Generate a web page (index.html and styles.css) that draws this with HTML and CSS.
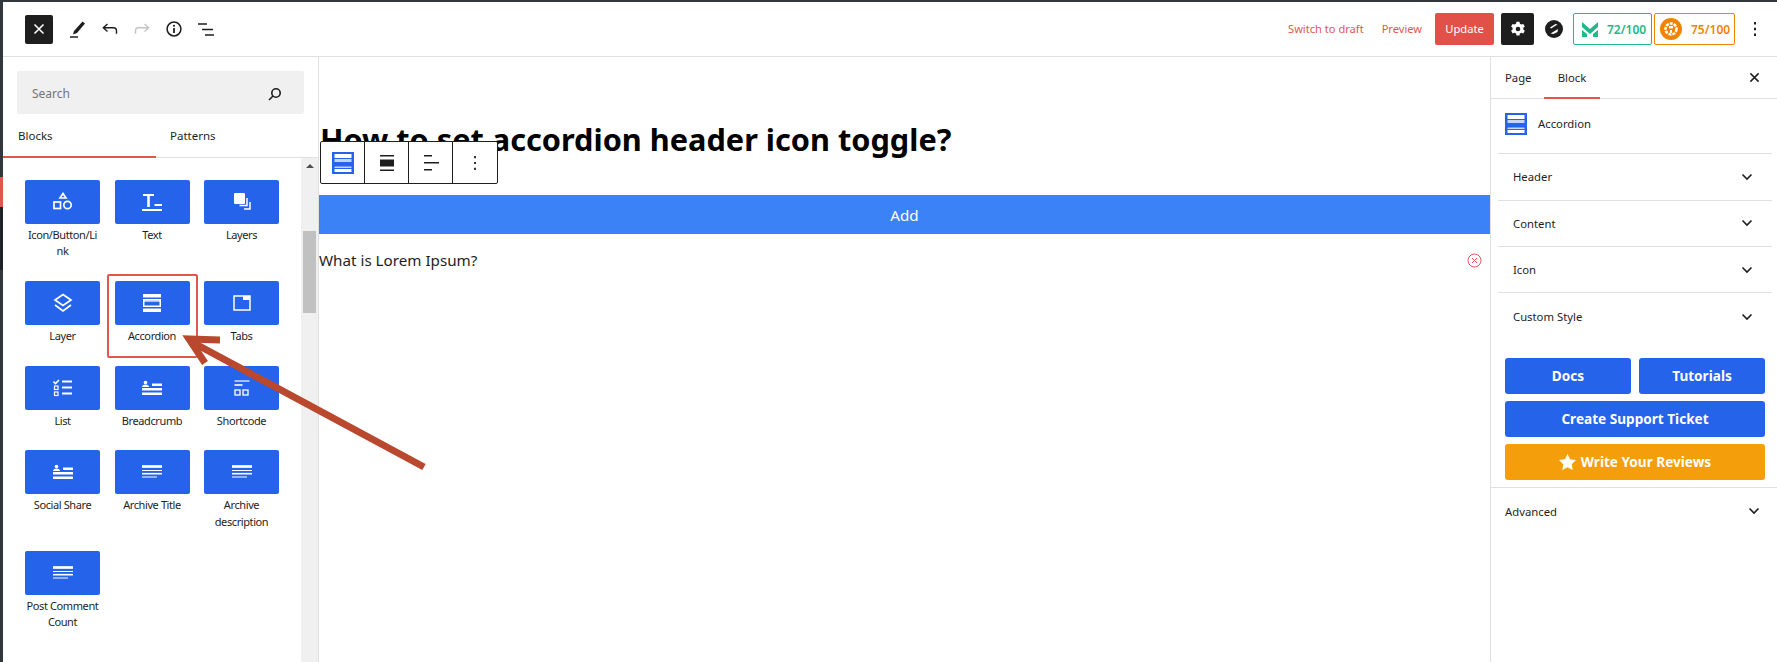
FILE: index.html
```html
<!DOCTYPE html>
<html lang="en">

<head>
  <meta charset="UTF-8">
  <title>Edit Page</title>
  <link rel="stylesheet" href="styles.css">
</head>

<body>
  <svg class="defs" width="0" height="0">
    <symbol id="chevron" viewBox="0 0 12 8"><path d="M1.5 1.5 6 6l4.5-4.5" fill="none" stroke="#1e1e1e" stroke-width="1.6"/></symbol>
    <symbol id="cross" viewBox="0 0 12 12"><path d="M1.5 1.5l9 9M10.5 1.5l-9 9" fill="none" stroke="currentColor" stroke-width="1.6"/></symbol>
    <symbol id="lines" viewBox="0 0 20 14"><path d="M0 1.5h20" stroke="#fff" stroke-width="2.7"/><path d="M0 5.5h20M0 12h15" stroke="#fff" stroke-width="1.2"/><path d="M0 8.7h20" stroke="#fff" stroke-width="1.6"/></symbol>
    <symbol id="person" viewBox="0 0 20 16"><circle cx="3.5" cy="2.5" r="1.8" fill="#fff"/><path d="M0 7c0-1.6 1.5-2.6 3.5-2.6S7 5.4 7 7zM10 3.5h10V6H10zM0 8h20v2.500H0zM0 12.500h20V15H0z" fill="#fff"/></symbol>
    <symbol id="accordion" viewBox="0 0 22 22"><rect width="22" height="22" fill="#2563eb"/><rect x="2.5" y="2" width="17" height="4" fill="#fff"/><rect x="2.5" y="7" width="17" height="3" fill="#c5d4f8"/><rect x="2.5" y="14.5" width="17" height="1.5" fill="#c5d4f8"/><rect x="2.5" y="17" width="17" height="3" fill="#fff"/></symbol>
  </svg>

  <div class="topline"></div>

  <div class="app">
    <div class="edge">
      <div class="edge-dark"></div>
      <div class="edge-red"></div>
      <div class="edge-dark edge-tail"></div>
      <div class="edge-grey"></div>
    </div>

    <div class="workspace">
      <header class="topbar">
        <div class="tools">
          <button class="close-btn" type="button"><svg width="12" height="12"><use href="#cross"/></svg></button>
          <svg class="tool" width="16" height="18" viewBox="0 0 16 18"><path d="M4 11 12.5 1.5l2.5 2L7 13l-4 1.5z" fill="#1e1e1e"/><path d="M0 17h8" stroke="#1e1e1e" stroke-width="1.5"/></svg>
          <svg class="tool" width="16" height="12" viewBox="0 0 16 12"><path d="M5.5 1 1.3 4.8l4.2 3.8M1.5 4.800h10c2 0 3 1.200 3 3v3" fill="none" stroke="#1e1e1e" stroke-width="1.4"/></svg>
          <svg class="tool" width="16" height="12" viewBox="0 0 16 12"><path d="M10.5 1l4.2 3.8-4.200 3.800M14.5 4.800h-10c-2 0-3 1.200-3 3v3" fill="none" stroke="#c4c4c4" stroke-width="1.4"/></svg>
          <svg class="tool" width="16" height="16" viewBox="0 0 18 18"><circle cx="9" cy="9" r="7.8" fill="none" stroke="#1e1e1e" stroke-width="1.7"/><path d="M9 8v5.5" stroke="#1e1e1e" stroke-width="2"/><circle cx="9" cy="5.3" r="1.2" fill="#1e1e1e"/></svg>
          <svg class="tool" width="16" height="13" viewBox="0 0 16 13"><path d="M0 1h9M4 6.5h11M7 12h9" stroke="#1e1e1e" stroke-width="1.5"/></svg>
        </div>

        <div class="actions">
          <a class="action-link draft-link">Switch to draft</a>
          <a class="action-link">Preview</a>
          <button class="update-btn" type="button">Update</button>
          <button class="gear-btn" type="button">
            <svg width="16" height="16" viewBox="0 0 16 16"><path d="M6.5.8h3l.4 2 1.5.8 1.9-.7 1.5 2.6-1.5 1.3v1.700l1.500 1.300-1.500 2.600-1.900-.7-1.500.8-.4 2h-3l-.4-2-1.500-.8-1.900.7L1.100 9.800l1.500-1.300V6.800L1.100 5.500l1.500-2.600 1.900.7 1.500-.8z" fill="#fff"/><circle cx="8" cy="8" r="2.3" fill="#1e1e1e"/></svg>
          </button>
          <svg class="badge-logo" width="18" height="18" viewBox="0 0 18 18"><circle cx="9" cy="9" r="9" fill="#1e1e1e"/><path d="M5 7.5 10.5 4l2 .5-6.500 4zM5.500 13.500 13 9l-.5 3-4 2z" fill="#fff"/></svg>
          <div class="score score-green">
            <svg width="16" height="16" viewBox="0 0 16 16"><path d="M0 1l8 7 8-7v5l-8 7-8-7z" fill="#22b98a"/><path d="M0 9l5 4v3H0zM16 9v7h-5v-3z" fill="#22b98a"/></svg>
            <span>72/100</span>
          </div>
          <div class="score score-orange">
            <svg width="22" height="22" viewBox="0 0 22 22"><circle cx="11" cy="11" r="11" fill="#f08400"/><circle cx="11" cy="11" r="5.5" fill="none" stroke="#fff" stroke-width="2.5" stroke-dasharray="3 1"/><path d="M9 8v2.5h4V8zM10 12v3h2v-3z" fill="#fff"/></svg>
            <span>75/100</span>
          </div>
          <svg class="more" width="4" height="16" viewBox="0 0 4 16"><path d="M2 1v2.4M2 6.800v2.400M2 12.600V15" stroke="#1e1e1e" stroke-width="2"/></svg>
        </div>
      </header>

      <div class="columns">
        <aside class="inserter">
          <div class="search">
            <span>Search</span>
            <svg width="14" height="14" viewBox="0 0 14 14"><circle cx="8" cy="6" r="4.2" fill="none" stroke="#1e1e1e" stroke-width="1.6"/><path d="M5 9l-4 4" stroke="#1e1e1e" stroke-width="1.6"/></svg>
          </div>

          <div class="inserter-tabs">
            <div class="inserter-tab inserter-tab-on">Blocks</div>
            <div class="inserter-tab">Patterns</div>
          </div>

          <div class="block-list">
            <div class="block-grid">
              <div class="block-item">
                <div class="block-tile"><svg width="20" height="20" viewBox="0 0 20 20" fill="none" stroke="#fff" stroke-width="1.7"><path d="M10 1.5l3 4.5H7z"/><rect x="1" y="10" width="6.5" height="6.5"/><circle cx="14.5" cy="13" r="3.7"/></svg></div>
                <div class="block-name block-name-break">Icon/Button/Link</div>
              </div>
              <div class="block-item">
                <div class="block-tile"><svg width="20" height="17" viewBox="0 0 20 17" fill="#fff"><path d="M1 0h11v2H7.8v11H5.2V2H1zM12.5 10H20v2h-7.5zM0 15h20v2H0z"/></svg></div>
                <div class="block-name">Text</div>
              </div>
              <div class="block-item">
                <div class="block-tile"><svg width="18" height="18" viewBox="0 0 18 18"><rect width="11" height="11" x="1" y="0" fill="#fff" rx="1"/><path d="M14 5v7.5H6.5M17 9v7H11" fill="none" stroke="#fff" stroke-width="1.5"/></svg></div>
                <div class="block-name">Layers</div>
              </div>

              <div class="block-item">
                <div class="block-tile"><svg width="20" height="20" viewBox="0 0 20 20" fill="none" stroke="#fff" stroke-width="1.7"><path d="M10 1.5 18 7l-8 5.5L2 7z"/><path d="M2 12l8 6 8-6"/></svg></div>
                <div class="block-name">Layer</div>
              </div>
              <div class="block-item">
                <div class="block-tile"><svg width="18" height="18" viewBox="0 0 18 18" fill="#fff"><path d="M0 0h18v3.5H0zM0 14.500h18V18H0z"/><path d="M0 5h18v8H0zm1.500 3v3.500h15V8z"/><path d="M1.500 6.500h15V8h-15z" fill="#a9bff5"/></svg></div>
                <div class="block-name">Accordion</div>
              </div>
              <div class="block-item">
                <div class="block-tile"><svg width="18" height="16" viewBox="0 0 18 16"><path d="M1 1h16v14H1z" fill="none" stroke="#fff" stroke-width="1.5"/><path d="M10 1h7v4h-7z" fill="#fff"/></svg></div>
                <div class="block-name">Tabs</div>
              </div>

              <div class="block-item">
                <div class="block-tile"><svg width="20" height="18" viewBox="0 0 20 18" fill="none" stroke="#fff"><path d="M.5 2.500l2 2 3.500-3.500" stroke-width="1.6"/><rect x="1.5" y="7" width="3.5" height="3.5" stroke-width="1.2"/><rect x="1.5" y="13" width="3.5" height="3.5" stroke-width="1.2"/><path d="M9 2.500h10M9 8.500h10M9 14.500h10" stroke-width="1.8"/></svg></div>
                <div class="block-name">List</div>
              </div>
              <div class="block-item">
                <div class="block-tile"><svg width="20" height="16"><use href="#person"/></svg></div>
                <div class="block-name">Breadcrumb</div>
              </div>
              <div class="block-item">
                <div class="block-tile"><svg width="16" height="16" viewBox="0 0 16 16" fill="none" stroke="#fff"><path d="M.5 1h15" stroke-width="1.2"/><path d="M.5 5h8" stroke-width="1.6"/><rect x="1" y="10" width="5" height="5" stroke-width="1.3"/><rect x="9" y="10" width="5" height="5" stroke-width="1.3"/></svg></div>
                <div class="block-name">Shortcode</div>
              </div>

              <div class="block-item">
                <div class="block-tile"><svg width="20" height="16"><use href="#person"/></svg></div>
                <div class="block-name">Social Share</div>
              </div>
              <div class="block-item">
                <div class="block-tile"><svg width="20" height="14"><use href="#lines"/></svg></div>
                <div class="block-name">Archive Title</div>
              </div>
              <div class="block-item">
                <div class="block-tile"><svg width="20" height="14"><use href="#lines"/></svg></div>
                <div class="block-name">Archive description</div>
              </div>

              <div class="block-item">
                <div class="block-tile"><svg width="20" height="14"><use href="#lines"/></svg></div>
                <div class="block-name">Post Comment Count</div>
              </div>
            </div>

            <div class="scrollbar">
              <div class="scroll-up"></div>
              <div class="scroll-thumb"></div>
            </div>
          </div>
        </aside>

        <main class="editor">
          <h1 class="page-title">How to set accordion header icon toggle?</h1>

          <div class="block-toolbar">
            <div class="toolbar-btn"><svg width="22" height="22"><use href="#accordion"/></svg></div>
            <div class="toolbar-btn"><svg width="14" height="16" viewBox="0 0 14 16" fill="#1e1e1e"><path d="M0 0h14v1.5H0zM0 4.500h14v7H0zM0 14.500h14V16H0z"/></svg></div>
            <div class="toolbar-btn"><svg width="16" height="16" viewBox="0 0 16 16" fill="#1e1e1e"><path d="M1 0h8v1.5H1zM1 7h15v1.500H1zM1 14h8v1.500H1z"/></svg></div>
            <div class="toolbar-btn"><svg width="4" height="14" viewBox="0 0 4 14"><path d="M2 0v2.2M2 5.900v2.200M2 11.800V14" stroke="#1e1e1e" stroke-width="1.8"/></svg></div>
          </div>

          <div class="add-bar">Add</div>

          <div class="accordion-row">
            <span>What is Lorem Ipsum?</span>
            <svg width="15" height="15" viewBox="0 0 15 15" fill="none" stroke="#e8535f"><circle cx="7.5" cy="7.5" r="6.5"/><path d="M5 5l5 5M10 5l-5 5"/></svg>
          </div>
        </main>

        <aside class="sidebar">
          <div class="side-tabs">
            <div class="side-tab">Page</div>
            <div class="side-tab side-tab-on">Block</div>
            <svg class="side-close" width="11" height="11"><use href="#cross"/></svg>
          </div>

          <div class="block-card">
            <svg width="22" height="22"><use href="#accordion"/></svg>
            <span>Accordion</span>
          </div>

          <div class="panel-row"><span>Header</span><svg width="12" height="8"><use href="#chevron"/></svg></div>
          <div class="panel-row"><span>Content</span><svg width="12" height="8"><use href="#chevron"/></svg></div>
          <div class="panel-row"><span>Icon</span><svg width="12" height="8"><use href="#chevron"/></svg></div>
          <div class="panel-row panel-row-last"><span>Custom Style</span><svg width="12" height="8"><use href="#chevron"/></svg></div>

          <div class="help-btns">
            <a class="help-btn">Docs</a>
            <a class="help-btn">Tutorials</a>
            <a class="help-btn help-btn-wide">Create Support Ticket</a>
            <a class="help-btn help-btn-wide help-btn-orange">
              <svg width="17" height="16" viewBox="0 0 17 16"><path d="M8.5 0l2.6 5.300 5.900.8-4.300 4.100 1 5.800-5.200-2.800L3.300 16l1-5.800L0 6.100l5.900-.8z" fill="#fff"/></svg>
              Write Your Reviews
            </a>
          </div>

          <div class="advanced-row"><span>Advanced</span><svg width="12" height="8"><use href="#chevron"/></svg></div>
        </aside>
      </div>
    </div>
  </div>

  <svg class="annotation" width="1777" height="662" viewBox="0 0 1777 662">
    <rect x="108" y="275" width="89" height="82" rx="1" fill="none" stroke="#e2574c" stroke-width="2"/>
    <path d="M424 467 190 341" fill="none" stroke="#b9482e" stroke-width="7"/>
    <path d="M220 340 189 339 205 363" fill="none" stroke="#b9482e" stroke-width="7"/>
  </svg>
</body>

</html>
```

FILE: styles.css
```css
* {
  box-sizing: border-box;
}

html,
body {
  height: 662px;
}

body {
  margin: 0;
  position: relative;
  overflow: hidden;
  background: #fff;
  color: #1e1e1e;
  font-family: "Noto Sans", sans-serif;
  font-size: 12px;
}

.defs {
  position: absolute;
}

.annotation {
  position: absolute;
  top: 0;
  left: 0;
  pointer-events: none;
}

.topline {
  height: 2px;
  background: #32373c;
}

.app {
  display: flex;
  height: 660px;
}

/* admin menu peeking out on the left */
.edge {
  width: 3px;
  display: flex;
  flex-direction: column;
}

.edge-dark {
  height: 175px;
  background: #32373c;
}

.edge-red {
  height: 30px;
  background: #e2574c;
}

.edge-tail {
  height: 63px;
  background: #1e2327;
}

.edge-grey {
  flex: 1;
  background: #32373c;
}

.workspace {
  flex: 1;
  min-width: 0;
  display: flex;
  flex-direction: column;
}

/* top bar */
.topbar {
  height: 55px;
  display: flex;
  align-items: center;
  justify-content: space-between;
  border-bottom: 1px solid #e0e0e0;
  padding: 0 20px 0 22px;
}

.tools {
  display: flex;
  align-items: center;
}

.close-btn {
  width: 28px;
  height: 29px;
  margin-right: 17px;
  display: flex;
  align-items: center;
  justify-content: center;
  padding: 0;
  border: none;
  border-radius: 2px;
  background: #1e1e1e;
  color: #fff;
}

.tool {
  margin-right: 16px;
}

.actions {
  display: flex;
  align-items: center;
  font-size: 11.1px;
}

.action-link {
  color: #e2574c;
  margin-right: 13px;
  padding-bottom: 2px;
}

.draft-link {
  margin-right: 18px;
}

.update-btn {
  width: 59px;
  height: 32px;
  margin-right: 7px;
  padding: 0 0 2px;
  border: none;
  border-radius: 2px;
  background: #e2504a;
  color: #fff;
  font-family: inherit;
  font-size: 11.2px;
}

.gear-btn {
  width: 33px;
  height: 32px;
  margin-right: 11px;
  display: flex;
  align-items: center;
  justify-content: center;
  padding: 0;
  border: none;
  border-radius: 2px;
  background: #1e1e1e;
}

.badge-logo {
  margin-right: 10px;
}

.score {
  height: 32px;
  display: flex;
  align-items: center;
  border: 1px solid;
  border-radius: 2px;
  font-size: 12px;
  font-weight: 600;
}

.score-green {
  width: 79px;
  margin-right: 2px;
  padding-left: 8px;
  gap: 9px;
  border-color: #22b98a;
  color: #22b98a;
}

.score-orange {
  width: 81px;
  margin-right: 18px;
  padding-left: 5px;
  gap: 9px;
  border-color: #f08400;
  color: #f08400;
}

.columns {
  flex: 1;
  min-height: 0;
  display: flex;
}

/* block inserter */
.inserter {
  width: 316px;
  display: flex;
  flex-direction: column;
  border-right: 1px solid #e0e0e0;
}

.search {
  height: 43px;
  margin: 14px 14px 0;
  padding: 2px 22px 0 15px;
  display: flex;
  align-items: center;
  justify-content: space-between;
  border-radius: 2px;
  background: #f0f0f0;
  color: #757575;
}

.inserter-tabs {
  height: 44px;
  display: flex;
  border-bottom: 1px solid #e0e0e0;
  font-size: 11.5px;
}

.inserter-tab {
  width: 153px;
  padding: 13px 0 0 15px;
  line-height: 18px;
}

.inserter-tab:last-child {
  padding-left: 14px;
}

.inserter-tab-on {
  border-bottom: 2px solid #e2574c;
  height: 44px;
}

.block-list {
  flex: 1;
  min-height: 0;
  display: flex;
  justify-content: space-between;
}

.block-grid {
  width: 276px;
  padding: 22px 0 0 22px;
  display: grid;
  grid-template-columns: repeat(3, 75px);
  column-gap: 14.5px;
  row-gap: 21.5px;
  align-content: start;
}

.block-tile {
  height: 44px;
  display: flex;
  align-items: center;
  justify-content: center;
  border-radius: 2px;
  background: #2563eb;
}

.block-name {
  margin-top: 3px;
  line-height: 16.2px;
  font-size: 11px;
  letter-spacing: -0.4px;
  text-align: center;
}

.block-name-break {
  padding: 0 3px;
  word-break: break-all;
}

.scrollbar {
  width: 17px;
  background: #f0f0f0;
  padding: 0 2px;
}

.scroll-up {
  width: 0;
  height: 0;
  margin: 6px auto 0;
  border-left: 4px solid transparent;
  border-right: 4px solid transparent;
  border-bottom: 4px solid #505050;
}

.scroll-thumb {
  height: 82px;
  margin-top: 63px;
  background: #c1c1c1;
}

/* editor canvas */
.editor {
  position: relative;
  width: 1171px;
}

.page-title {
  margin: 62px 0 0;
  padding-left: 1px;
  font-size: 30.7px;
  line-height: 40px;
  font-weight: 700;
  color: #000;
}

.block-toolbar {
  position: absolute;
  top: 84px;
  left: 1px;
  height: 43px;
  display: flex;
  border: 1px solid #1e1e1e;
  border-radius: 2px;
  background: #fff;
}

.toolbar-btn {
  width: 44px;
  display: flex;
  align-items: center;
  justify-content: center;
  border-right: 1px solid #1e1e1e;
}

.toolbar-btn:last-child {
  border-right: none;
}

.add-bar {
  height: 39px;
  margin-top: 36px;
  background: #3b82f6;
  color: #fff;
  font-size: 15.2px;
  line-height: 40px;
  text-align: center;
}

.accordion-row {
  margin-top: 14px;
  padding-right: 8px;
  display: flex;
  align-items: center;
  justify-content: space-between;
  font-size: 15.2px;
  line-height: 24px;
}

/* settings sidebar */
.sidebar {
  flex: 1;
  min-width: 0;
  border-left: 1px solid #e0e0e0;
  font-size: 11.3px;
}

.side-tabs {
  height: 42px;
  display: flex;
  align-items: center;
  border-bottom: 1px solid #e0e0e0;
}

.side-tab {
  width: 53px;
  height: 42px;
  padding-left: 14px;
  line-height: 42px;
}

.side-tab-on {
  width: 56px;
  padding-left: 0;
  text-align: center;
  border-bottom: 2px solid #e2574c;
}

.side-close {
  margin: 0 17px 0 auto;
  color: #1e1e1e;
}

.block-card {
  height: 54.3px;
  padding: 0 14px 5px;
  display: flex;
  align-items: center;
  gap: 11px;
}

.panel-row {
  height: 46.3px;
  margin: 0 5px 0 7px;
  padding: 0 19px 0 15px;
  display: flex;
  align-items: center;
  justify-content: space-between;
  border-top: 1px solid #e0e0e0;
}

.panel-row-last {
  height: 65.8px;
  padding-bottom: 18px;
}

.help-btns {
  padding: 0 12px 0 14px;
  display: grid;
  grid-template-columns: 1fr 1fr;
  gap: 7px 8px;
}

.help-btn {
  height: 36px;
  display: flex;
  align-items: center;
  justify-content: center;
  gap: 5px;
  border-radius: 3px;
  background: #2563eb;
  color: #fff;
  font-size: 13.6px;
  font-weight: 700;
}

.help-btn-wide {
  grid-column: 1 / 3;
}

.help-btn-orange {
  background: #f59e0b;
}

.advanced-row {
  height: 48px;
  margin-top: 7px;
  padding: 0 17px 0 14px;
  display: flex;
  align-items: center;
  justify-content: space-between;
  border-top: 1px solid #e0e0e0;
}
```
